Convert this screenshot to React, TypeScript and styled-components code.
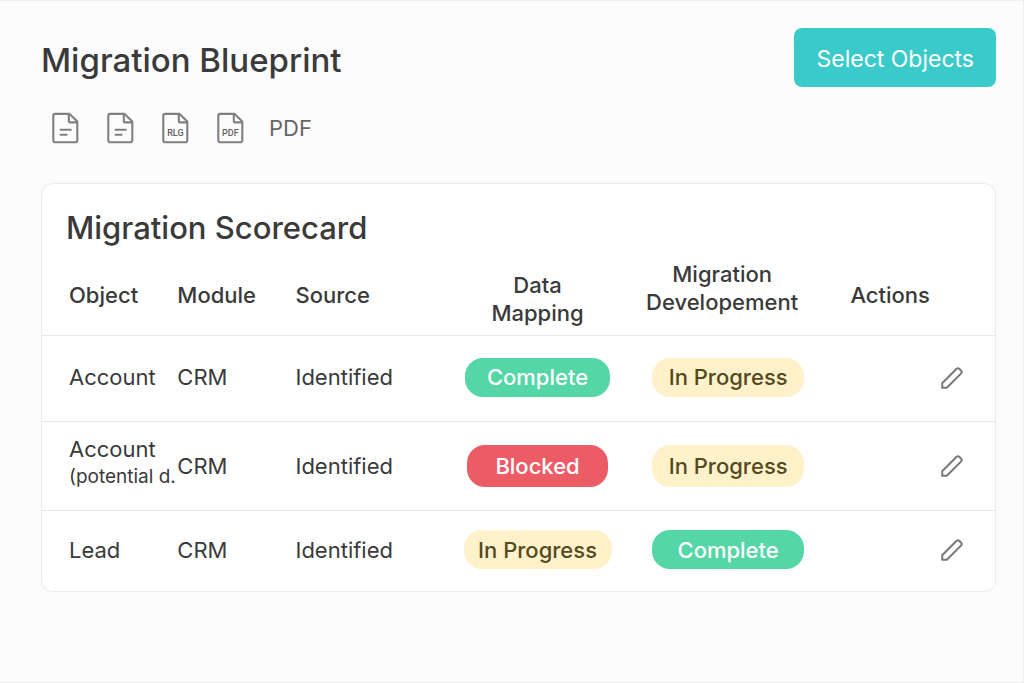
import React from "react";
import styled, { createGlobalStyle, css } from "styled-components";

const GlobalStyle = createGlobalStyle`
  *, *::before, *::after { box-sizing: border-box; }
  body { margin: 0; background: #fcfcfc; }
  button { font: inherit; cursor: pointer; }
`;

const Page = styled.main`
  min-height: 100vh;
  padding: 27px 27px 40px 41px;
  border: solid #efefef;
  border-width: 1px 1px 1px 0;
  background: #fcfcfc;
  color: #3a3a3a;
  font-family: Inter, "Liberation Sans", sans-serif;
  font-size: 22px;
  line-height: 28px;
`;

const PageHeader = styled.header`
  display: flex;
  align-items: flex-start;
  justify-content: space-between;
  gap: 24px;
`;

const PageTitle = styled.h1`
  margin: 0;
  padding-top: 12px;
  font-size: 33px;
  line-height: 40px;
  font-weight: 500;
`;

const PrimaryButton = styled.button`
  min-height: 59px;
  padding: 2px 22px 0;
  border: 0;
  border-radius: 8px;
  background: #3acaca;
  color: #fff;
  font-size: 23px;
`;

const ExportBar = styled.nav`
  display: flex;
  align-items: center;
  gap: 23px;
  padding: 23px 0 0 8px;
`;

const ExportButton = styled.button`
  display: flex;
  align-items: center;
  justify-content: center;
  width: 32px;
  height: 36px;
  padding: 0;
  border: 0;
  background: none;
  color: #808080;
`;

const ExportLink = styled.a`
  color: #666;
  text-decoration: none;
`;

const Card = styled.section`
  margin-top: 37px;
  border: 1px solid #ececec;
  border-radius: 12px;
  background: #fff;
  box-shadow: 0 0 6px rgba(0, 0, 0, 0.02);
`;

const CardTitle = styled.h2`
  margin: 0;
  padding: 24px 24px 12px;
  font-size: 31px;
  line-height: 40px;
  font-weight: 500;
`;

const Table = styled.table`
  width: 100%;
  table-layout: fixed;
  border-collapse: collapse;
`;

const Column = styled.col<{ $share: number }>`
  width: ${(p) => p.$share}%;
`;

const HeadCell = styled.th<{ $valign?: "top" | "bottom"; $inset?: boolean }>`
  height: 75px;
  padding: 0 0 4px;
  text-align: left;
  vertical-align: middle;
  font-weight: 500;
  ${(p) => p.$inset && css`padding-left: 27px;`}
  ${(p) => p.$valign && css`
    padding-bottom: 8px;
    text-align: center;
    vertical-align: ${p.$valign};
  `}
  ${(p) => p.$valign === "top" && css`padding-right: 12px;`}
`;

const Cell = styled.td<{ $align?: "center" | "right"; $inset?: boolean }>`
  padding: 0 0 2px;
  text-align: ${(p) => p.$align ?? "left"};
  white-space: nowrap;
  ${(p) => p.$inset && css`padding-left: 27px;`}
  ${(p) => p.$align === "right" && css`padding-right: 28px;`}
`;

const BodyRow = styled.tr<{ $height: number; $stacked: boolean }>`
  height: ${(p) => p.$height}px;
  border-top: 1px solid #e9e9e9;
  ${(p) => p.$stacked && css`
    ${Cell} { padding-bottom: 0; }
    ${Cell}:first-child { padding-bottom: 6px; }
  `}
`;

const Detail = styled.small`
  display: block;
  font-size: 19px;
`;

type Status = "Complete" | "In Progress" | "Blocked";

const pillColors: Record<Status, string> = {
  Complete: "background: #54d6a6; color: #fff;",
  "In Progress": "background: #fff2cb; color: #544a22;",
  Blocked: "background: #ec5c66; color: #fff;",
};

const Pill = styled.span<{ $status: Status; $width: number; $tall: boolean }>`
  display: inline-flex;
  align-items: center;
  justify-content: center;
  width: ${(p) => p.$width}px;
  height: ${(p) => (p.$tall ? 42 : 39)}px;
  border-radius: 18px;
  vertical-align: middle;
  font-weight: 500;
  ${(p) => pillColors[p.$status]}
`;

const EditButton = styled.button`
  display: inline-flex;
  padding: 4px;
  border: 0;
  background: none;
  color: #777;
  vertical-align: middle;
`;

const FileLabel = styled.text`
  font: 500 9px Roboto, sans-serif;
  text-anchor: middle;
  fill: #606060;
  stroke: none;
`;

function FileIcon({ label }: { label?: string }) {
  return (
    <svg width="28" height="32" viewBox="0 0 28 32" fill="none" stroke="currentColor" strokeWidth="2.1" strokeLinejoin="round" strokeLinecap="round" aria-hidden="true">
      <path d="M4.1 1.9H18.6L26.3 9.6V28.5A1.8 1.8 0 0 1 24.5 30.3H4.1A1.8 1.8 0 0 1 2.3 28.5V3.7A1.8 1.8 0 0 1 4.1 1.9Z" />
      <path d="M17.8 2.2V9.2A1.2 1.2 0 0 0 19 10.4H26" />
      {label ? (
        <FileLabel x="14.4" y="24.2">{label}</FileLabel>
      ) : (
        <path d="M9.6 17.8H19.8M9.6 22.8H15.6" />
      )}
    </svg>
  );
}

function PencilIcon() {
  return (
    <svg width="22" height="22" viewBox="0 0 22 22" fill="none" stroke="currentColor" strokeWidth="2" strokeLinejoin="round" aria-hidden="true">
      <path d="M1.2 20.8V16.2L15.6 1.8Q16.9 .7 18.2 1.8L20.2 3.8Q21.3 5.1 20.2 6.4L5.8 20.8Z" />
    </svg>
  );
}

interface Migration {
  object: string;
  detail?: string;
  module: string;
  source: string;
  mapping: Status;
  development: Status;
  height: number;
}

const migrations: Migration[] = [
  { object: "Account", module: "CRM", source: "Identified", mapping: "Complete", development: "In Progress", height: 86 },
  { object: "Account", detail: "(potential d.", module: "CRM", source: "Identified", mapping: "Blocked", development: "In Progress", height: 89 },
  { object: "Lead", module: "CRM", source: "Identified", mapping: "In Progress", development: "Complete", height: 81 },
];

const mappingWidths: Record<Status, number> = { Complete: 145, Blocked: 141, "In Progress": 148 };

export default function App() {
  return (
    <>
      <GlobalStyle />
      <Page>
        <PageHeader>
          <PageTitle>Migration Blueprint</PageTitle>
          <PrimaryButton type="button">Select Objects</PrimaryButton>
        </PageHeader>
        <ExportBar aria-label="Documents">
          <ExportButton type="button" aria-label="Summary document"><FileIcon /></ExportButton>
          <ExportButton type="button" aria-label="Detail document"><FileIcon /></ExportButton>
          <ExportButton type="button" aria-label="RLG file"><FileIcon label="RLG" /></ExportButton>
          <ExportButton type="button" aria-label="PDF file"><FileIcon label="PDF" /></ExportButton>
          <ExportLink href="#pdf">PDF</ExportLink>
        </ExportBar>
        <Card>
          <CardTitle>Migration Scorecard</CardTitle>
          <Table>
            <colgroup>
              <Column $share={14.2} />
              <Column $share={12.4} />
              <Column $share={15.4} />
              <Column $share={20} />
              <Column $share={20} />
              <Column $share={18} />
            </colgroup>
            <thead>
              <tr>
                <HeadCell scope="col" $inset>Object</HeadCell>
                <HeadCell scope="col">Module</HeadCell>
                <HeadCell scope="col">Source</HeadCell>
                <HeadCell scope="col" $valign="bottom">Data<br />Mapping</HeadCell>
                <HeadCell scope="col" $valign="top">Migration<br />Developement</HeadCell>
                <HeadCell scope="col" $inset>Actions</HeadCell>
              </tr>
            </thead>
            <tbody>
              {migrations.map((m, i) => (
                <BodyRow key={i} $height={m.height} $stacked={!!m.detail}>
                  <Cell $inset>
                    {m.object}
                    {m.detail && <Detail>{m.detail}</Detail>}
                  </Cell>
                  <Cell>{m.module}</Cell>
                  <Cell>{m.source}</Cell>
                  <Cell $align="center">
                    <Pill $status={m.mapping} $width={mappingWidths[m.mapping]} $tall={!!m.detail}>{m.mapping}</Pill>
                  </Cell>
                  <Cell $align="center">
                    <Pill $status={m.development} $width={152} $tall={!!m.detail}>{m.development}</Pill>
                  </Cell>
                  <Cell $align="right">
                    <EditButton type="button" aria-label={`Edit ${m.object}`}><PencilIcon /></EditButton>
                  </Cell>
                </BodyRow>
              ))}
            </tbody>
          </Table>
        </Card>
      </Page>
    </>
  );
}
